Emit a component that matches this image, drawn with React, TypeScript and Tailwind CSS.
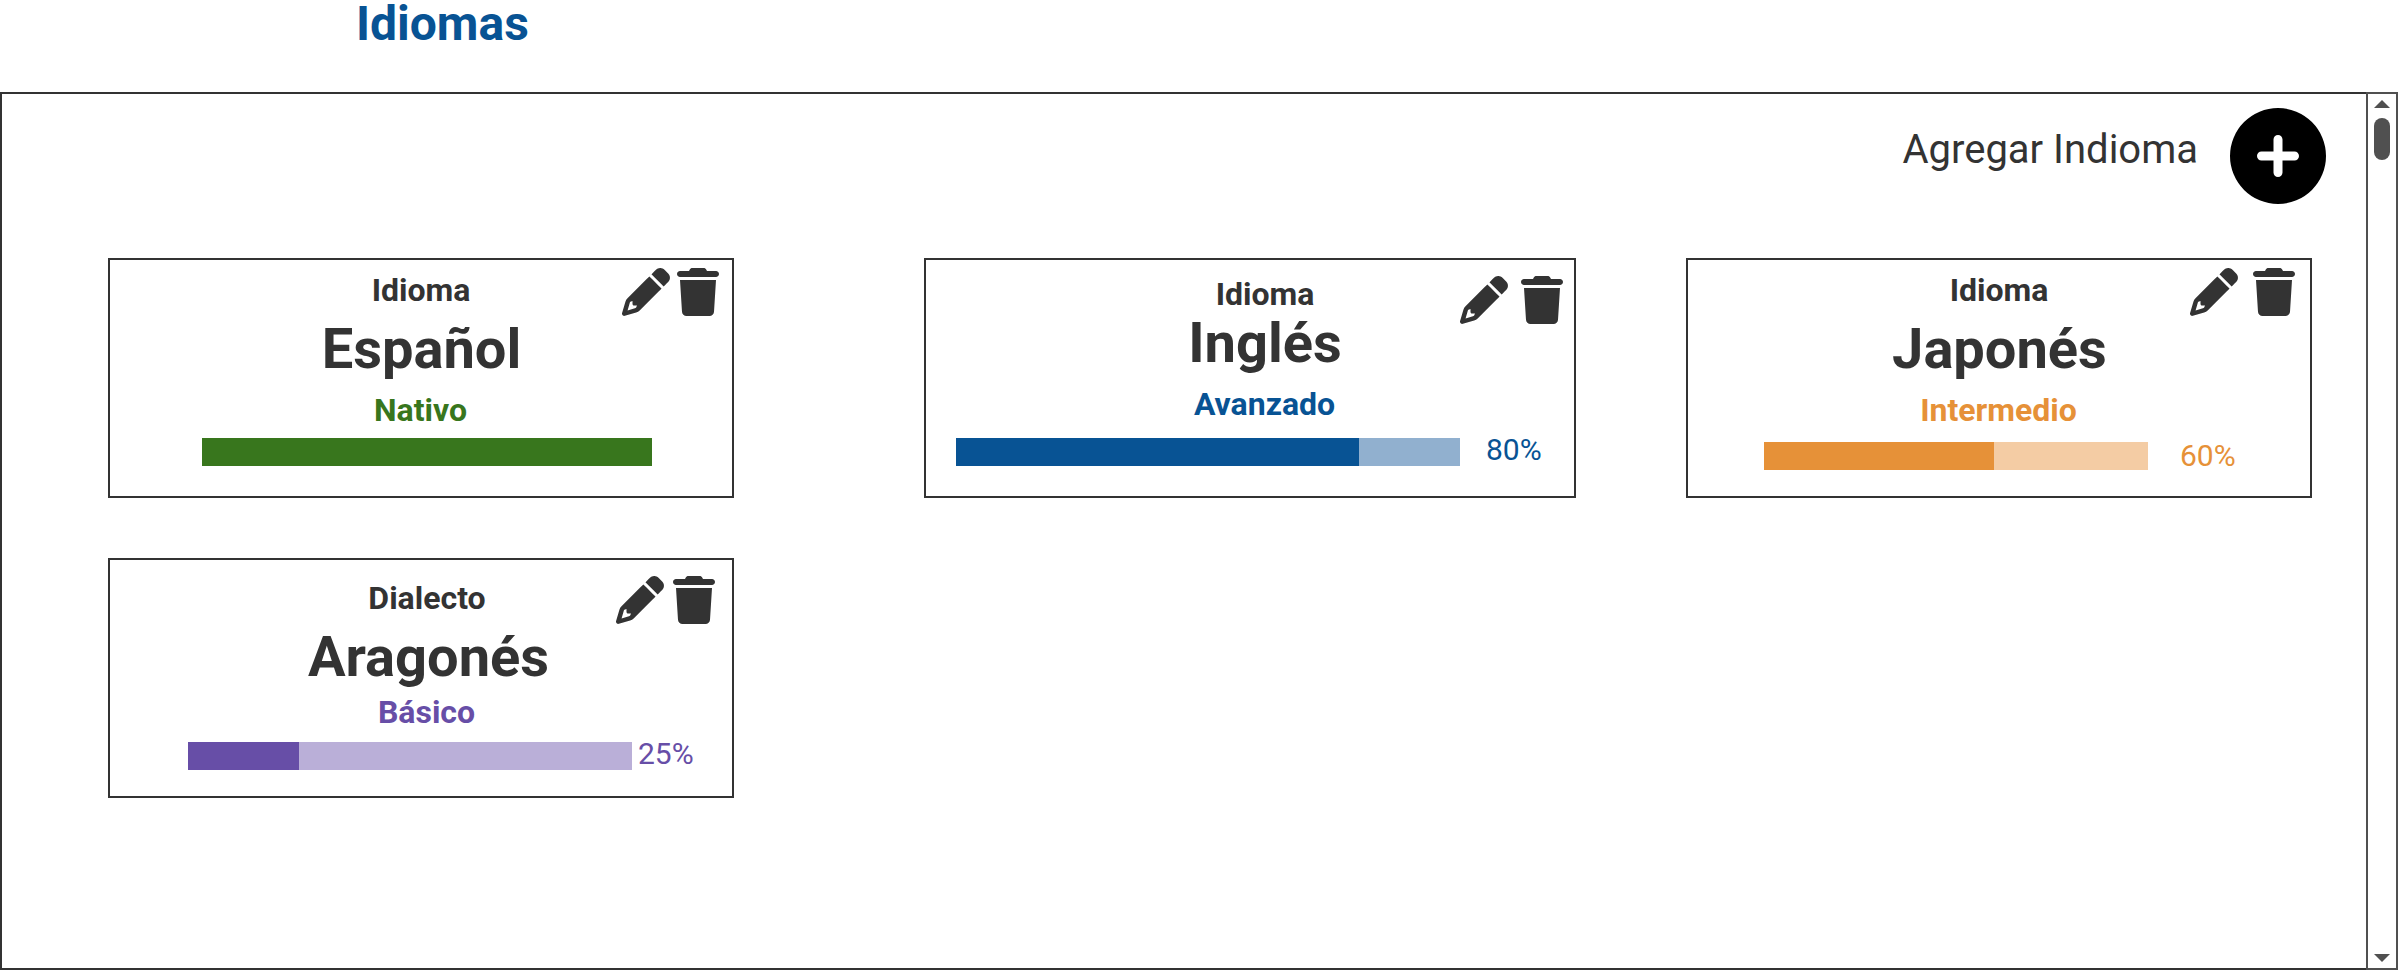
import React from "react";
import { FaCirclePlus, FaTrash } from "react-icons/fa6";

interface Language {
  kind: string;
  name: string;
  level: string;
  percent: number;
  showPercent: boolean;
  card: string;
  text: string;
  kindClass: string;
  nameClass: string;
  levelClass: string;
  meterClass: string;
  track: string;
  fill: string;
  percentClass: string;
  actions: string;
}

const languages: Language[] = [
  {
    kind: "Idioma",
    name: "Español",
    level: "Nativo",
    percent: 100,
    showPercent: false,
    card: "ml-[106px] w-[626px]",
    text: "",
    kindClass: "mt-[10px]",
    nameClass: "mt-[9px] pl-px",
    levelClass: "mt-[11px] pr-px text-[#38761d]",
    meterClass: "mt-2 ml-[92px]",
    track: "w-[450px] bg-[#38761d]",
    fill: "bg-[#38761d]",
    percentClass: "",
    actions: "mt-2 mr-[13px] gap-[7px]",
  },
  {
    kind: "Idioma",
    name: "Inglés",
    level: "Avanzado",
    percent: 80,
    showPercent: true,
    card: "ml-[190px] w-[652px]",
    text: "pl-[30px]",
    kindClass: "mt-[14px]",
    nameClass: "-mt-px",
    levelClass: "mt-[11px] pr-px text-[#085394]",
    meterClass: "mt-[14px] ml-[30px]",
    track: "w-[504px] bg-[#91b0cf]",
    fill: "bg-[#085394]",
    percentClass: "-mt-[2px] ml-[26px] text-[#085394]",
    actions: "mt-4 mr-[11px] gap-[13px]",
  },
  {
    kind: "Idioma",
    name: "Japonés",
    level: "Intermedio",
    percent: 60,
    showPercent: true,
    card: "ml-[110px] w-[626px]",
    text: "",
    kindClass: "mt-[10px]",
    nameClass: "mt-[9px] pl-px",
    levelClass: "mt-[11px] pr-px text-[#e69138]",
    meterClass: "mt-3 ml-[76px]",
    track: "w-[384px] bg-[#f4cca4]",
    fill: "bg-[#e69138]",
    percentClass: "ml-8 text-[#e69138]",
    actions: "mt-2 mr-[15px] gap-[15px]",
  },
  {
    kind: "Dialecto",
    name: "Aragonés",
    level: "Básico",
    percent: 25,
    showPercent: true,
    card: "ml-[106px] w-[626px]",
    text: "pl-3",
    kindClass: "mt-[18px]",
    nameClass: "mt-[9px] pl-[3px]",
    levelClass: "mt-[5px] pr-px text-[#674ea7]",
    meterClass: "mt-[10px] ml-[78px]",
    track: "w-[444px] bg-[#baafd8]",
    fill: "bg-[#674ea7]",
    percentClass: "-mt-[2px] ml-[6px] text-[#674ea7]",
    actions: "mt-4 mr-[17px] gap-[9px]",
  },
];

function PencilIcon() {
  return (
    <svg className="h-12 w-12" viewBox="0 0 512 512" fill="currentColor">
      <path d="M410.3 231l11.3-11.3-33.9-33.9-62.1-62.1L291.7 89.8l-11.3 11.3-22.6 22.6L58.6 322.9c-10.4 10.4-18 23.3-22.2 37.4L1 480.7c-2.5 8.4-.2 17.5 6.1 23.7s15.3 8.5 23.7 6.1l120.3-35.4c14.1-4.2 27-11.8 37.4-22.2L387.7 253.7 410.3 231zM160 399.4l-9.1 22.7c-4 3.1-8.5 5.4-13.3 6.9L59.4 452l23-78.1c1.4-4.9 3.8-9.4 6.9-13.3l22.7-9.1v32c0 8.8 7.2 16 16 16h32zM362.7 18.7L348.3 33.2 325.7 55.8 314.3 67.1l33.9 33.9 62.1 62.1 33.9 33.9 11.3-11.3 22.6-22.6 14.5-14.5c25-25 25-65.5 0-90.5L453.3 18.7c-25-25-65.5-25-90.5 0z" />
    </svg>
  );
}

function LanguageCard({ language }: { language: Language }) {
  return (
    <article className={`grid h-[240px] shrink-0 border-2 border-[#333333] ${language.card}`}>
      <div className="col-start-1 row-start-1 flex flex-col">
        <div className={`flex flex-col text-center font-bold ${language.text}`}>
          <p className={`text-[32px] leading-10 ${language.kindClass}`}>{language.kind}</p>
          <h2 className={`text-[56px] leading-[60px] ${language.nameClass}`}>{language.name}</h2>
          <p className={`text-[32px] leading-10 ${language.levelClass}`}>{language.level}</p>
        </div>
        <div className={`flex h-7 ${language.meterClass}`}>
          <div className={`h-7 shrink-0 ${language.track}`}>
            <div className={`h-full ${language.fill}`} style={{ width: `${language.percent}%` }} />
          </div>
          {language.showPercent && (
            <span className={`text-[30px] leading-7 ${language.percentClass}`}>{language.percent}%</span>
          )}
        </div>
      </div>
      <div className={`col-start-1 row-start-1 flex self-start justify-self-end ${language.actions}`}>
        <button type="button" aria-label="Editar">
          <PencilIcon />
        </button>
        <button type="button" aria-label="Eliminar">
          <FaTrash className="h-12 w-[42px]" />
        </button>
      </div>
    </article>
  );
}

function ScrollBar() {
  return (
    <div className="-mt-[2px] -mr-[2px] -mb-[2px] flex w-8 shrink-0 flex-col items-center border-2 border-[#505050] py-[6px] text-[#505050]">
      <svg className="h-2 w-4" viewBox="0 0 16 8" fill="currentColor">
        <path d="M0 8 8 0l8 8z" />
      </svg>
      <div className="mt-[10px] h-[42px] w-4 rounded-full bg-[#505050]" />
      <svg className="mt-auto h-2 w-4" viewBox="0 0 16 8" fill="currentColor">
        <path d="m0 0 8 8 8-8z" />
      </svg>
    </div>
  );
}

export default function App() {
  return (
    <main className="flex h-[970px] w-[2398px] flex-col bg-white font-['Roboto',sans-serif] text-[#333333]">
      <h1 className="h-[92px] pl-[356px] text-[48px] leading-[48px] font-bold text-[#085394]">Idiomas</h1>
      <section className="flex h-[878px] border-2 border-[#333333]">
        <div className="flex flex-1 flex-col">
          <div className="flex h-[164px] justify-end pt-[14px] pr-10">
            <span className="mt-[18px] mr-8 text-[40px] leading-[48px]">Agregar Indioma</span>
            <button type="button" aria-label="Agregar" className="h-24 w-24 text-black">
              <FaCirclePlus className="h-24 w-24" />
            </button>
          </div>
          <div className="flex">
            {languages.slice(0, 3).map((language) => (
              <LanguageCard key={language.name} language={language} />
            ))}
          </div>
          <div className="mt-[60px] flex">
            {languages.slice(3).map((language) => (
              <LanguageCard key={language.name} language={language} />
            ))}
          </div>
        </div>
        <ScrollBar />
      </section>
    </main>
  );
}
